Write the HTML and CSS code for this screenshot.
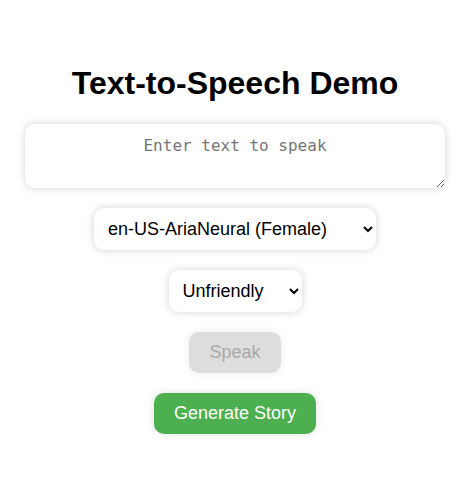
FILE: index.html
```html
<!DOCTYPE html>
<html lang="en">
<head>
<meta charset="utf-8">
<title>Text-to-Speech Demo</title>
<link rel="stylesheet" href="styles.css">
</head>
<body>
<main class="page">
  <h1 class="title">Text-to-Speech Demo</h1>
  <textarea class="text-input" placeholder="Enter text to speak"></textarea>
  <select class="field voice">
    <option>en-US-AriaNeural (Female)</option>
  </select>
  <select class="field tone">
    <option>Unfriendly</option>
  </select>
  <button class="btn speak" disabled>Speak</button>
  <button class="btn generate">Generate Story</button>
</main>
</body>
</html>
```
FILE: styles.css
```css
html, body {
  margin: 0;
  padding: 0;
  background: #ffffff;
}
.page {
  font-family: "Liberation Sans", Arial, sans-serif;
  display: flex;
  flex-direction: column;
  align-items: center;
  padding-top: 44px;
}
.title {
  font-size: 32px;
  font-weight: bold;
  margin: 21px 0 22px;
  color: #000;
}
.text-input {
  box-sizing: border-box;
  width: 420px;
  height: 64px;
  padding: 12px 10px 10px;
  border: none;
  border-radius: 10px;
  box-shadow: 0 0 8px rgba(0,0,0,0.18);
  font-family: "DejaVu Sans Mono", monospace;
  font-size: 16px;
  text-align: center;
  resize: vertical;
  margin-bottom: 20px;
}
.text-input::placeholder {
  color: #757575;
}
.field {
  box-sizing: border-box;
  height: 42px;
  padding: 0 10px;
  border: none;
  border-radius: 10px;
  background: #fff;
  box-shadow: 0 0 8px rgba(0,0,0,0.18);
  font-family: "Liberation Sans", Arial, sans-serif;
  font-size: 18px;
  color: #000;
  margin-bottom: 20px;
}
.voice { width: 282px; }
.tone { width: 133px; }
.btn {
  box-sizing: border-box;
  height: 41px;
  padding: 0 10px;
  border: none;
  border-radius: 10px;
  font-family: "Liberation Sans", Arial, sans-serif;
  font-size: 18px;
  white-space: nowrap;
  margin-bottom: 20px;
}
.speak {
  width: 92px;
  background: #dddddd;
  color: #a9a9a9;
  box-shadow: 0 0 8px rgba(0,0,0,0.08);
}
.generate {
  width: 162px;
  background: #4caf50;
  color: #fff;
  box-shadow: 0 0 8px rgba(0,0,0,0.12);
}
```
